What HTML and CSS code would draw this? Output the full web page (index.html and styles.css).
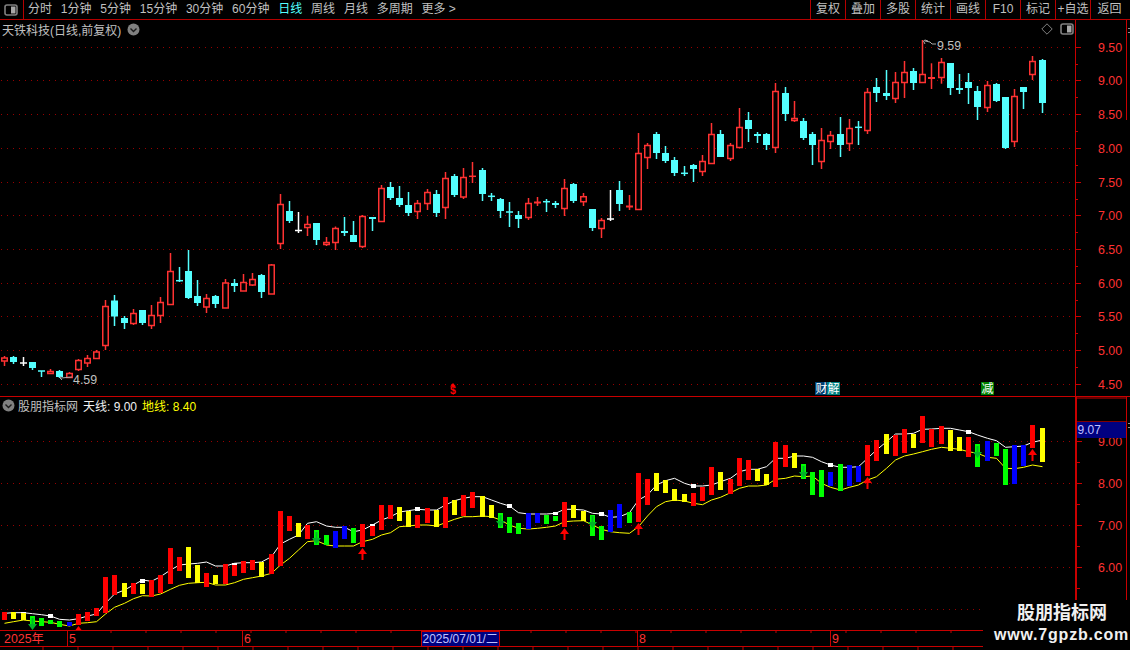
FILE: index.html
```html
<!DOCTYPE html>
<html lang="zh-CN">
<head>
<meta charset="utf-8">
<title>天铁科技</title>
<link rel="stylesheet" href="styles.css">
</head>
<body>
<div class="app">
  <header class="toolbar">
    <div class="toggle">
      <svg class="toggle-icon" width="14" height="12" viewBox="0 0 14 12"><rect x="1" y="1" width="12" height="10" rx="2" class="ic-frame"/><rect x="7" y="2.5" width="4.5" height="7" class="ic-fill"/></svg>
    </div>
    <nav class="periods">
      <span>分时</span><span>1分钟</span><span>5分钟</span><span>15分钟</span><span>30分钟</span><span>60分钟</span><span class="active">日线</span><span>周线</span><span>月线</span><span>多周期</span><span>更多 &gt;</span>
    </nav>
    <div class="tools">
      <span>复权</span><span>叠加</span><span>多股</span><span>统计</span><span>画线</span><span>F10</span><span>标记</span><span>+自选</span><span class="last">返回</span>
    </div>
  </header>

  <section class="pane pane-main">
    <svg id="mainChart" class="chart" width="1130" height="376" viewBox="0 20 1130 376"></svg>
    <div class="pane-title title-main">
      <span>天铁科技(日线,前复权)</span>
      <svg class="chev" width="13" height="13" viewBox="0 0 13 13"><circle cx="6.5" cy="6.5" r="6" class="chev-bg"/><path d="M3.5 5.5 6.5 8.5 9.5 5.5" class="chev-mark"/></svg>
    </div>
    <div class="pane-actions">
      <svg width="12" height="12" viewBox="0 0 12 12"><path d="M6 .8 11.2 6 6 11.2 .8 6Z" class="diamond"/></svg>
      <svg width="14" height="12" viewBox="0 0 14 12"><rect x="1" y="1" width="12" height="10" rx="2" class="ic-frame"/><rect x="7" y="2.5" width="4.5" height="7" class="ic-fill"/></svg>
    </div>
  </section>

  <section class="pane pane-sub">
    <svg id="subChart" class="chart" width="1130" height="233" viewBox="0 397 1130 233"></svg>
    <div class="pane-title title-sub">
      <svg class="chev" width="13" height="13" viewBox="0 0 13 13"><circle cx="6.5" cy="6.5" r="6" class="chev-bg"/><path d="M3.5 5.5 6.5 8.5 9.5 5.5" class="chev-mark"/></svg>
      <span class="ind-name">股朋指标网</span>
      <span class="ind-sky">天线: 9.00</span>
      <span class="ind-ground">地线: 8.40</span>
    </div>
  </section>

  <svg id="dateAxis" class="chart" width="1130" height="20" viewBox="0 630 1130 20"></svg>

  <aside class="watermark">
    <div class="wm-name">股朋指标网</div>
    <div class="wm-url">www.7gpzb.com</div>
  </aside>
</div>
<script src="app.js"></script>
</body>
</html>
```

FILE: styles.css
```css
* { box-sizing: border-box; }
html, body { margin: 0; padding: 0; background: #000; overflow: hidden; }
body { font-family: "Liberation Sans", "Noto Sans CJK SC", sans-serif; font-size: 12px; color: #c0c0c0; }
.app { position: relative; width: 1130px; height: 650px; display: flex; flex-direction: column; background: #000; overflow: hidden; }

.toolbar { height: 20px; flex: none; display: flex; align-items: stretch; border-bottom: 1px solid #b40000; line-height: 18px; }
.toggle { width: 24px; flex: none; border-right: 1px solid #b40000; display: flex; align-items: center; justify-content: center; padding-right: 1px; }
.periods { display: flex; gap: 8.8px; padding-left: 4px; flex: 1; }
.periods .active { color: #54ffff; }
.tools { display: flex; width: 320px; flex: none; }
.tools span { width: 35px; text-align: center; border-left: 1px solid #b40000; }
.tools .last { width: 38px; }

.ic-frame { fill: #000; stroke: #808080; stroke-width: 1.6; }
.ic-fill { fill: #a8a8a8; }
.chev-bg { fill: #808080; }
.chev-mark { fill: none; stroke: #1a1a1a; stroke-width: 1.4; }
.diamond { fill: none; stroke: #808080; stroke-width: 1; }

.pane { position: relative; flex: none; }
.pane-main { height: 377px; border-bottom: 1px solid #c80000; }
.pane-sub { height: 233px; }
.chart { display: block; flex: none; }

.pane-title { position: absolute; top: 1px; display: flex; align-items: center; height: 16px; white-space: pre; }
.title-main { left: 2px; gap: 6px; }
.title-sub { left: 2px; top: 0; gap: 3px; }
.ind-name { margin-right: 2px; }
.ind-sky { color: #f0f0f0; margin-right: 2px; }
.ind-ground { color: #ffff00; }

.pane-actions { position: absolute; right: 56px; top: 3px; display: flex; gap: 7px; align-items: center; }

.watermark { position: absolute; left: 983px; top: 600px; width: 147px; height: 50px; background: #000; text-align: center; color: #f0f0f0; font-weight: bold; }
.wm-name { font-size: 18px; line-height: 26px; padding-left: 11px; }
.wm-url { font-size: 16px; line-height: 18px; letter-spacing: 0.8px; white-space: nowrap; padding-left: 10px; }

.ax { fill: #ff3232; font-size: 12.4px; font-family: "Liberation Sans", sans-serif; }
.note { fill: #c0c0c0; font-size: 12.4px; font-family: "Liberation Sans", sans-serif; }
.date-sel { fill: #c0c0ff; font-size: 12px; font-family: "Liberation Sans", "Noto Sans CJK SC", sans-serif; }
.date-red { fill: #ff3232; font-size: 12.4px; font-family: "Liberation Sans", "Noto Sans CJK SC", sans-serif; }
.tag { fill: #fff; font-size: 12px; font-family: "Noto Sans CJK SC", sans-serif; }
.dollar { fill: #ff0000; font-size: 10.5px; font-weight: bold; font-family: "Liberation Sans", sans-serif; }
```

FILE: app.js
```js
// Candles: [colour, body top, body bottom, wick top, wick bottom] in page pixels.
var K = [
['r',358,361,356,366],['c',357,362,356,364],['w',363,363,357,366],['c',362,368,362,370],['c',371,371,371,377],
['r',371.5,373.5,369,374],['c',371,377,370,378],['r',373.5,377.5,372,378],['r',360.5,369.5,359,371],['r',358.5,363,355,367],
['r',352,358.5,350,358.5],['r',306.5,345.5,300,350],['c',300.5,316.5,295,326],['c',318,323,316,329],['r',313.5,323.5,309,325],
['c',310,323,310,325],['r',315.5,325.5,305,329],['r',302.5,315.5,297,323],['r',271.5,304.5,253,304.5],['c',280.7,280.7,267,282],
['c',271,298,250,299],['c',296,303,280,306],['r',298.5,307,294,313],['c',296,304,295,308],['r',283,308,279,308],
['c',283,286,279,292],['r',282.5,291,274,291],['r',279.5,285,273,286],['c',275,292,274,298],['r',265,294,264,294],
['r',204.5,243.5,194,249],['c',211,221,201,223],['w',230.5,230.5,212,233],['r',224.5,227.5,216,236],['c',223,240,223,245],
['r',242.5,244.5,237,246],['r',228.5,242.5,226.5,250],['c',231,233,217,236],['c',235,242,221,242],['r',216.5,246.5,215,248],
['c',217,219,217,231],['r',188.5,221.5,185,221.5],['c',187,198,182,200],['c',198,205,186,207],['c',205,213,192,216],
['r',203.5,211.5,200,219],['r',192.5,203.5,189,210],['c',194,213,190,217],['r',178.5,207.5,172,219],['c',176,195,174,197],
['r',177.5,197,168,199],['r',176.3,176.3,162,183],['c',170,194,168,201],['c',196.3,196.3,193,201],['c',199,211,198,218],
['c',212,212,202,227],['c',215,219,211,228],['r',203.5,217.5,198,220],['R',201.5,203.5,197,206],['c',201.7,201.7,199,212],
['c',203,205,201,208],['r',188.5,208.5,179,216],['c',184,201,183,203],['r',196.7,201.7,193,206],['c',209,228,209,231],
['r',220.5,228.5,218,238],['w',219,219,190,221],['c',190,204,181,211],['R',205.5,207.5,195,210],['r',153.5,209.5,133,209.5],
['r',145.5,157.5,143,169],['c',134,153,132,159],['c',153,161,146,163],['c',160,173,157,176],['c',173.3,173.3,166,176],
['c',165,169,164,182],['r',161.5,171.5,155,176],['r',134.5,163.5,123,163.5],['c',134,157,130,157],['r',145.5,158.5,143,161],
['r',127.5,147.5,108,147.5],['c',120,129,112,142],['c',134,136,132,143],['c',134,145,133,150],['r',91.5,147.5,83,153],
['c',93,114,87,121],['r',118.5,120.5,101,122],['c',121,138,118,140],['c',134,145,132,165],['r',140.5,161.5,128,169],
['r',135.5,141.5,131,149],['c',134,145,117,157],['r',128.5,143.5,119,151],['c',127.3,127.3,121,145],['r',92.5,130.5,88,134],
['c',87,93,78,102],['c',93,96,70,100],['r',82.5,98.5,72,103],['r',72.5,82.5,61,98],['c',71,83,68,90],
['r',74.5,82.5,40,82.5],['R',77,79,63.3,89],['r',62.5,77.5,58,83.7],['c',63,88,63,95],['c',88,90,74,94],
['c',82,88,73,104],['c',91,107,86,120],['r',85.5,107.5,81,112],['c',84,101,83,102],['c',97,148,97,149],
['r',96.5,141.5,89,147],['c',87,92,87,109],['r',61.5,74.5,56,80],['c',60,103,59,113]
];
// Indicator bars: [top, bottom, colour]; index matches K.
var B = [
[612,620,'r'],[612,619,'y'],[613,620,'y'],[616,626,'g'],[618,626,'g'],[620,624,'g'],[621,627,'g'],[622,626,'b'],[614,625,'r'],[612,621,'r'],
[608,616,'r'],[577,613,'r'],[575,595,'r'],[583,597,'y'],[583,594,'r'],[584,594,'y'],[580,597,'r'],[575,593,'r'],[548,584,'r'],[557,571,'r'],
[547,578,'y'],[565,583,'y'],[573,587,'r'],[575,584,'y'],[564,584,'r'],[565,576,'r'],[561,573,'r'],[560,570,'r'],[562,577,'y'],[554,574,'r'],
[511,566,'r'],[516,531,'r'],[523,537,'y'],[525,539,'r'],[530,545,'g'],[535,545,'g'],[531,548,'b'],[526,539,'b'],[528,543,'g'],[524,547,'r'],
[526,536,'r'],[505,530,'r'],[505,519,'r'],[507,521,'y'],[511,527,'y'],[515,528,'r'],[508,523,'r'],[510,527,'y'],[497,528,'r'],[500,515,'y'],
[495,516,'r'],[492,508,'r'],[496,517,'y'],[505,518,'y'],[513,528,'g'],[517,533,'g'],[523,534,'g'],[513,529,'b'],[513,523,'b'],[515,524,'g'],
[516,521,'g'],[502,527,'r'],[505,518,'y'],[511,521,'y'],[515,536,'g'],[526,540,'g'],[510,532,'b'],[504,528,'b'],[512,523,'g'],[473,522,'r'],
[479,505,'r'],[473,491,'y'],[480,493,'y'],[489,501,'y'],[494,502,'y'],[493,506,'r'],[487,501,'r'],[467,495,'r'],[472,490,'y'],[479,494,'r'],
[458,486,'r'],[460,480,'r'],[469,481,'y'],[474,485,'y'],[442,487,'r'],[445,467,'r'],[453,468,'y'],[464,479,'g'],[472,495,'g'],[470,497,'g'],
[472,486,'b'],[464,491,'g'],[465,486,'b'],[466,482,'b'],[445,476,'r'],[440,461,'r'],[434,454,'y'],[435,456,'r'],[429,453,'r'],[434,448,'y'],
[416,443,'r'],[429,447,'r'],[426,444,'r'],[430,451,'y'],[437,451,'y'],[437,457,'r'],[444,467,'g'],[441,461,'b'],[443,456,'g'],[449,485,'g'],
[445,484,'b'],[445,466,'b'],[425,448,'r'],[428,462,'y']
];
var CAPS = [[2,612,613],[5,614,618],[15,579,583],[25,563,565],[40,524,526],[45,507,511],[55,504,508],[60,512,515],[65,512,516],[75,484,488],[90,463,467],[105,430,434]];
var SKY = [613.3,612.7,612.7,613.7,614.7,616,619.3,620,618.7,616,614,603.3,594,590,585,580,581.3,576.7,570,565,564,563.3,562,566,566,563.3,562.7,562.7,562,556.7,544,539.3,535,
523.3,521.7,526,527.3,527.3,531.7,530,525,520,516.7,512,510.7,509.3,510,510,505,500.7,498.3,496.7,496.7,500,503.3,506,512.7,514,514,514,513.3,509.3,509.3,510,513.3,514,517.3,516.7,512.7,500,
495,485,480.7,478.3,483.3,486,486,485,481.7,478.3,471.7,469.3,469.3,466.7,458.3,458.3,456,456,457.3,461.7,465,467.3,467.3,466.7,458.3,450,441.7,434,434,433.3,429.3,429,428.3,428.3,430,431.7,435,438.3,440.7,447.3,446.7,446,442.3,440];
var GROUND = [623.3,621.7,620,621,621.7,622.3,624.3,626,623.3,622.7,621.7,614,607.3,603.3,598.7,595.7,596,594,589.3,585.3,583.3,582.7,582.3,585,585,582.7,579.3,577.7,576,573.3,565,558.3,550,
541.7,540.7,545,546,546,546,541.7,539.3,535,532.7,526.7,526,525,525,526,522.7,519.3,516.7,516.7,516,516.7,520,525,528.3,529,528.3,527.3,526,521.7,521,520.7,525,529.3,531.7,532.7,533.3,526.7,
516,506.7,501.7,500,501,503.3,504.7,500,497.3,492.7,488.3,486,486,485,479.3,478.3,476,476.7,476,483.3,487.3,490,487.3,485,480,476.7,468.3,460,456,454,451.7,449.3,447.3,448.3,449.3,451.7,453.3,457.3,458.3,468.3,468.7,467.3,465,466.7];
var UP = [[8,626],[39,548],[61,528],[69,523],[94,477],[112,449]];
var DOWN = [[3,630],[34,544],[54,527],[64,528],[87,478],[106,458]];

var COL = { r: '#ff3232', c: '#54ffff', w: '#ffffff', R: '#ff3232' };
var BAR = { r: '#ff0000', y: '#ffff00', g: '#00ff00', b: '#0000ff' };
var AXIS = '#c80000', DOT = '#980000';

function cx(i) { return Math.round(4.3 + 9.18 * i) + 0.5; }
function line(x1, y1, x2, y2, c, w, extra) {
  return '<line x1="' + x1 + '" y1="' + y1 + '" x2="' + x2 + '" y2="' + y2 + '" stroke="' + c + '" stroke-width="' + w + '"' + (extra || '') + '/>';
}
function rect(x, y, w, h, c, extra) {
  return '<rect x="' + x + '" y="' + y + '" width="' + w + '" height="' + h + '" fill="' + c + '"' + (extra || '') + '/>';
}
function text(x, y, s, cls, anchor) {
  return '<text x="' + x + '" y="' + y + '" class="' + cls + '"' + (anchor ? ' text-anchor="' + anchor + '"' : '') + '>' + s + '</text>';
}
function poly(arr, c) {
  var p = arr.map(function (y, i) { return cx(i) + ',' + y; }).join(' ');
  return '<polyline points="' + p + '" fill="none" stroke="' + c + '" stroke-width="1"/>';
}
function dots(y, xEnd) {
  return line(1, y + 0.5, xEnd, y + 0.5, DOT, 1, ' stroke-dasharray="1 5" shape-rendering="crispEdges"');
}

// ---------- main pane ----------
var m = '';
[47, 80, 114, 148, 182, 215, 249, 283, 316, 350, 384].forEach(function (y, k) {
  m += dots(y, 1075);
  m += line(1075, y + 0.5, 1081, y + 0.5, AXIS, 1);
  if (k < 10) m += line(1075, y + 17.5, 1078, y + 17.5, AXIS, 1);
  m += text(1098, y + 4.6, (9.5 - k * 0.5).toFixed(2), 'ax');
});
m += line(1075.5, 20, 1075.5, 396, AXIS, 1);
m += line(1126.5, 20, 1126.5, 120, AXIS, 1);
m += line(1128, 28.5, 1130, 28.5, '#909090', 1) + line(1128, 32.5, 1130, 32.5, '#909090', 1);

K.forEach(function (d, i) {
  var x = cx(i), c = COL[d[0]], top = d[1], bot = d[2];
  m += line(x, d[3], x, d[4], c, 1.5);
  if (d[0] === 'R') {
    m += rect(x - 3.5, top, 7, bot - top, c);
  } else if (bot - top < 0.5) {
    m += line(x - 3.5, top, x + 3.5, top, c, 1.5);
  } else if (d[0] === 'r') {
    m += '<rect x="' + (x - 2.75) + '" y="' + top + '" width="5.5" height="' + (bot - top) + '" fill="#000" stroke="' + c + '" stroke-width="1.5"/>';
  } else {
    m += rect(x - 3.5, top, 7, bot - top, c);
  }
});

// high and low notes
m += '<path d="M925 44 L923.5 41 L925 40 L928 41 M925 41 L930 42 L932 44 L936 44" fill="none" stroke="#a8a8a8" stroke-width="1"/>';
m += text(937, 49.5, '9.59', 'note');
m += '<path d="M61 376 L60 378 L62 380 M61 378 L72 377" fill="none" stroke="#a8a8a8" stroke-width="1"/>';
m += text(73, 383.5, '4.59', 'note');

// event tags
m += '<path d="M453 383 L456 386.5 L450 386.5Z" fill="#ff0000"/>' + text(453, 394, '$', 'dollar', 'middle');
m += rect(815, 382, 13, 13, '#004070') + text(815.5, 393, '财', 'tag');
m += rect(827, 382, 13, 13, '#008080') + text(827.5, 393, '解', 'tag');
m += rect(981, 382, 13, 13, '#008000') + text(981.5, 393, '减', 'tag');
document.getElementById('mainChart').innerHTML = m;

// ---------- indicator pane ----------
var s = '';
[441, 483, 525, 567, 609].forEach(function (y) { s += dots(y, 1075); });
[441, 483, 525, 567].forEach(function (y, k) {
  s += line(1077, y + 0.5, 1082, y + 0.5, AXIS, 1);
  s += line(1077, y + 21.5, 1080, y + 21.5, AXIS, 1);
  s += text(1098, y + 5, (9 - k).toFixed(2), 'ax');
});
s += line(1076, 397, 1076, 630, AXIS, 2);
s += line(1075, 398, 1127, 398, AXIS, 1);
s += line(1126.5, 397, 1126.5, 630, AXIS, 1);
s += rect(1077, 422, 49, 16, '#000080') + line(1077, 421.5, 1126, 421.5, '#800000', 1);
s += text(1077.5, 434, '9.07', 'date-sel');
s += line(1128, 423.5, 1130, 423.5, '#909090', 1) + line(1128, 427.5, 1130, 427.5, '#909090', 1);

s += poly(SKY, '#ffffff') + poly(GROUND, '#ffff00');
B.forEach(function (d, i) {
  s += rect(cx(i) - 2.5, d[0], 5, d[1] - d[0], BAR[d[2]]);
});
CAPS.forEach(function (d) { s += rect(cx(d[0]) - 2.5, d[1], 5, d[2] - d[1], '#ffffff'); });
UP.forEach(function (d) {
  var x = cx(d[0]), y = d[1];
  s += '<path d="M' + x + ' ' + y + ' L' + (x + 4.5) + ' ' + (y + 6) + ' L' + (x + 1) + ' ' + (y + 6) + ' L' + (x + 1) + ' ' + (y + 12) + ' L' + (x - 1) + ' ' + (y + 12) + ' L' + (x - 1) + ' ' + (y + 6) + ' L' + (x - 4.5) + ' ' + (y + 6) + 'Z" fill="#ff0000"/>';
});
DOWN.forEach(function (d) {
  var x = cx(d[0]), y = d[1];
  s += '<path d="M' + x + ' ' + y + ' L' + (x + 4.5) + ' ' + (y - 6) + ' L' + (x + 1) + ' ' + (y - 6) + ' L' + (x + 1) + ' ' + (y - 12) + ' L' + (x - 1) + ' ' + (y - 12) + ' L' + (x - 1) + ' ' + (y - 6) + ' L' + (x - 4.5) + ' ' + (y - 6) + 'Z" fill="#00b428"/>';
});
document.getElementById('subChart').innerHTML = s;

// ---------- date axis ----------
var a = '';
a += line(0, 630.5, 1130, 630.5, AXIS, 1) + line(0, 646.5, 1130, 646.5, AXIS, 1);
for (var t = 0; t < 29; t++) {
  var tx = 23 + t * 35;
  a += line(tx + 88, 631, tx + 88, 633, AXIS, 1);
  a += line(tx + 20, 647, tx + 20, 650, AXIS, 1);
}
[67.5, 242.5, 637.5, 830.5].forEach(function (x) { a += line(x, 631, x, 646, AXIS, 1); });
a += text(4, 643, '2025年', 'date-red');
a += text(69, 643, '5', 'date-red') + text(244, 643, '6', 'date-red') + text(639, 643, '8', 'date-red') + text(832, 643, '9', 'date-red');
a += '<rect x="421.5" y="631.5" width="78" height="15" fill="#000080" stroke="' + AXIS + '" stroke-width="1"/>';
a += text(422.5, 643, '2025/07/01/二', 'date-sel');
document.getElementById('dateAxis').innerHTML = a;
```
